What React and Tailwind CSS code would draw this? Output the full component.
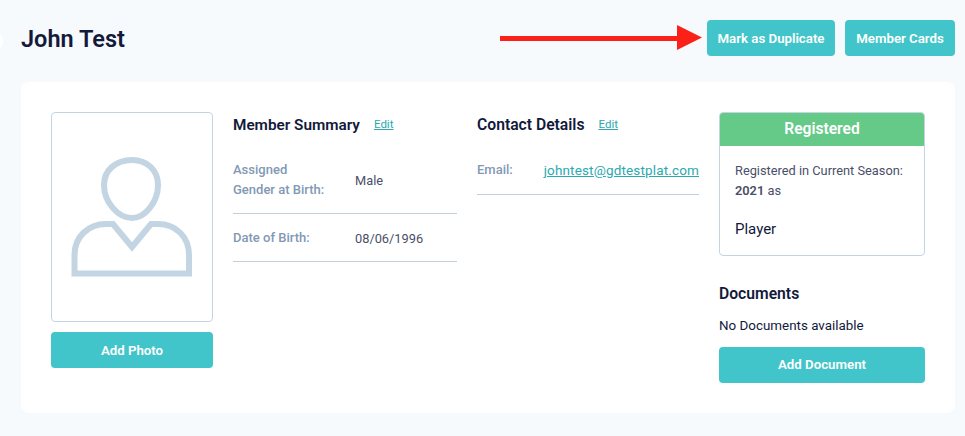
import React from "react";

const font = "font-['Roboto','Liberation_Sans',sans-serif]";

const TealButton = ({ className = "", children }) => (
  <button className={`flex h-9 items-center justify-center rounded bg-[#42c5ca] pt-px text-[13.25px] font-semibold text-white ${className}`}>
    {children}
  </button>
);

// placeholder silhouette in the photo box
const PersonIcon = () => (
  <svg width="122" height="122" viewBox="0 0 122 122" fill="none" stroke="#c3d4e3" strokeWidth="6">
    <path d="M32 4 C47 4 58 14 58 29 C58 46 45 62 32 62 C18 62 4 46 4 29 C4 14 16 4 32 4 Z" transform="translate(29 0)" />
    <path d="M3.5 117.5 V99 C3.5 81 17 68 35 68 H42 L61 91 L80 68 H87 C105 68 118 81 118 99 V117.5 Z" />
  </svg>
);

const Row = ({ label, value }) => (
  <div className="flex items-center border-b border-[#bfd0df] pb-[13px]">
    <div className="w-[122px] text-[13px] leading-5 font-medium text-[#8299b5]">{label}</div>
    <div className="pt-px text-[12.8px] text-[#4a4f68]">{value}</div>
  </div>
);

const SectionTitle = ({ title, className }) => (
  <div className="flex h-[26px] items-center">
    <h2 className={`font-semibold text-[#12193b] ${className}`}>{title}</h2>
    <a className="ml-[14px] text-[11.5px] text-[#2aa9af] underline">Edit</a>
  </div>
);

export default function App() {
  return (
    <div className={`relative h-[436px] w-[965px] overflow-hidden bg-[#f7fafd] px-[10px] pt-5 ${font}`}>
      {/* sliver of a control at the page edge */}
      <div className="absolute top-[31px] left-[-17px] h-5 w-5 rounded-full bg-white" />

      {/* red annotation arrow */}
      <svg className="absolute top-[24px] left-[499px]" width="204" height="28" viewBox="0 0 204 28">
        <path d="M1 12 H178 V1 L203 13.5 L178 26 V17 H1 Z" fill="#fc2118" />
      </svg>

      <header className="flex h-9 items-center justify-between pl-[11px]">
        <h1 className="pt-1 text-[23.5px] font-semibold text-[#12193b]">John Test</h1>
        <div className="flex gap-[10px]">
          <TealButton className="w-[128px]">Mark as Duplicate</TealButton>
          <TealButton className="w-[110px]">Member Cards</TealButton>
        </div>
      </header>

      <main className="mt-[26px] ml-[11px] flex h-[331px] w-[934px] rounded-lg bg-white p-[30px]">
        <div className="w-[162px]">
          <div className="flex h-[210px] items-center justify-center rounded border border-[#c3d4e3]">
            <PersonIcon />
          </div>
          <TealButton className="mt-[10px] w-full">Add Photo</TealButton>
        </div>

        <section className="ml-5 w-[224px]">
          <SectionTitle title="Member Summary" className="text-[15.3px]" />
          <div className="mt-[22px]">
            <Row label={<>Assigned<br />Gender at Birth:</>} value="Male" />
            <div className="mt-[14px]">
              <Row label="Date of Birth:" value="08/06/1996" />
            </div>
          </div>
        </section>

        <section className="ml-5 w-[222px]">
          <SectionTitle title="Contact Details" className="text-[15.7px]" />
          <div className="mt-[22px] flex justify-between border-b border-[#bfd0df] pb-[14px] leading-5">
            <span className="text-[13px] font-medium text-[#8299b5]">Email:</span>
            <a className="text-[13.5px] tracking-[0.15px] text-[#2aa9af] underline">johntest@gdtestplat.com</a>
          </div>
        </section>

        <aside className="ml-5 w-[206px]">
          <div className="overflow-hidden rounded border border-[#c3d4e3]">
            <div className="-mx-px -mt-px flex h-[34px] items-center justify-center bg-[#65c988] pt-px text-[15.6px] font-semibold text-white">
              Registered
            </div>
            <div className="h-[109px] px-[15px] pt-[15px] text-[12.8px] leading-5 text-[#4a4f68]">
              <p>Registered in Current Season:</p>
              <p><b className="font-semibold">2021</b> as</p>
              <p className="mt-[18px] text-[15px] text-[#12193b]">Player</p>
            </div>
          </div>
          <h2 className="mt-[26px] text-[15.7px] font-semibold text-[#12193b]">Documents</h2>
          <p className="mt-[12px] text-[13.4px] leading-4 text-[#12193b]">No Documents available</p>
          <TealButton className="mt-[13px] w-full">Add Document</TealButton>
        </aside>
      </main>
    </div>
  );
}
